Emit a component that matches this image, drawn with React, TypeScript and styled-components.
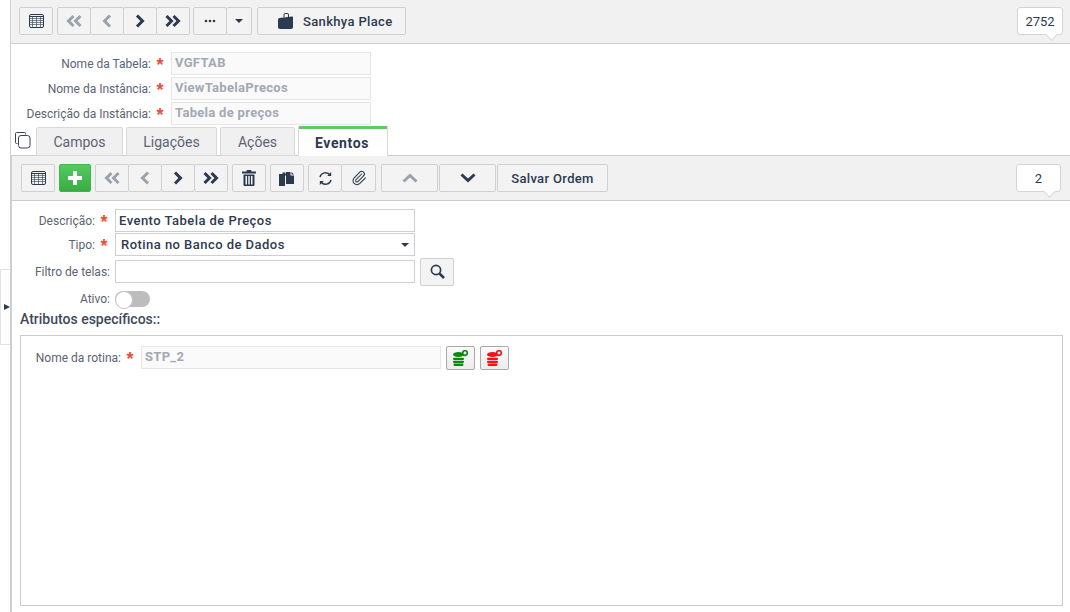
import React from "react";
import styled, { createGlobalStyle } from "styled-components";
import { Paperclip } from "lucide-react";

const Global = createGlobalStyle`
  html, body { margin: 0; padding: 0; background: #fff; overflow: hidden; }
  body { font-family: Roboto, "Liberation Sans", Arial, sans-serif; color: #2f3b4e; }
  * { box-sizing: border-box; }
`;

const Page = styled.div`
  position: relative;
  height: 612px;
  padding-left: 10px;
  overflow: hidden;
`;
const Handle = styled.div`
  position: absolute;
  left: 0;
  top: 269px;
  width: 10px;
  height: 76px;
  border: 1px solid #e2e2e2;
  border-right: none;
  background: #fff;
  display: flex;
  align-items: center;
  justify-content: center;
  &::before {
    content: "";
    margin-left: 3px;
    border-left: 6px solid #2c3a4f;
    border-top: 3px solid transparent;
    border-bottom: 3px solid transparent;
  }
`;
const Main = styled.div`
  height: 100%;
  border-left: 1px solid #cfcfcf;
  display: flex;
  flex-direction: column;
`;
const TopBar = styled.div`
  height: 44px;
  flex: none;
  padding: 7px 7px 0 8px;
  background: #f2f1f1;
  border-bottom: 1px solid #cccccc;
  display: flex;
  align-items: flex-start;
  gap: 4px;
`;
const SubBar = styled.div`
  height: 46px;
  flex: none;
  padding: 8px 9px 0 9px;
  background: #f2f1f1;
  border-top: 1px solid #cccccc;
  border-bottom: 1px solid #cccccc;
  display: flex;
  align-items: flex-start;
  gap: 4px;
`;
const Group = styled.div<{ $ml?: number; $mr?: number }>`
  display: flex;
  margin-left: ${(p) => p.$ml ?? 0}px;
  margin-right: ${(p) => p.$mr ?? 0}px;
  & > button + button { margin-left: -1px; }
`;
const SplitGroup = styled.div`
  display: flex;
  gap: 1px;
  margin-left: 1px;
`;
const Btn = styled.button<{ $w?: number; $h?: number }>`
  width: ${(p) => p.$w ?? 34}px;
  height: ${(p) => p.$h ?? 28}px;
  flex: none;
  padding: 0;
  border: 1px solid #d0d0d0;
  border-radius: 2px;
  background: #f3f3f3;
  color: #2c3a4f;
  display: inline-flex;
  align-items: center;
  justify-content: center;
  font-family: Roboto, "Liberation Sans", Arial, sans-serif;
  font-size: 13px;
  font-weight: 500;
  letter-spacing: 0.35px;
`;
const PlaceBtn = styled(Btn)`
  justify-content: flex-start;
  padding-left: 20px;
  gap: 10px;
`;
const AddBtn = styled(Btn)`
  border: 1px solid #3fb54a;
  background: linear-gradient(#55c95e, #37ad43);
  color: #fff;
`;
const Counter = styled.div<{ $w: number; $h: number }>`
  position: relative;
  margin-left: auto;
  width: ${(p) => p.$w}px;
  height: ${(p) => p.$h}px;
  background: #fff;
  border: 1px solid #d4d4d4;
  border-radius: 3px;
  font-size: 13px;
  color: #2c3a4f;
  display: flex;
  align-items: center;
  justify-content: center;
  &::after {
    content: "";
    position: absolute;
    right: 6px;
    bottom: -5px;
    width: 8px;
    height: 8px;
    background: #fff;
    border-right: 1px solid #d4d4d4;
    border-bottom: 1px solid #d4d4d4;
    transform: rotate(45deg);
  }
`;
const HeaderFields = styled.div`
  padding-top: 8px;
  display: flex;
  flex-direction: column;
  gap: 2px;
`;
const Row = styled.div<{ $gapTop?: number }>`
  display: flex;
  align-items: center;
  height: 23px;
  margin-top: ${(p) => p.$gapTop ?? 0}px;
`;
const Label = styled.label<{ $w: number }>`
  width: ${(p) => p.$w}px;
  flex: none;
  text-align: right;
  font-size: 12px;
  color: #5b6472;
  white-space: nowrap;
`;
const Star = styled.span`
  width: 18px;
  flex: none;
  margin-right: 2px;
  text-align: center;
  color: #e8503a;
  font-size: 18px;
  line-height: 23px;
  padding-top: 4px;
  font-family: "Liberation Sans", Arial, sans-serif;
  font-weight: 700;
`;
const ReadOnly = styled.div<{ $w: number }>`
  width: ${(p) => p.$w}px;
  height: 23px;
  flex: none;
  border: 1px solid #e6e6e6;
  background: #fafafa;
  color: #a3a9b3;
  font-size: 13px;
  font-weight: 700;
  line-height: 20px;
  padding-left: 3px;
  letter-spacing: 0.3px;
`;
const Input = styled.div<{ $ml?: number }>`
  width: 300px;
  height: 23px;
  flex: none;
  margin-left: ${(p) => p.$ml ?? 0}px;
  border: 1px solid #cfcfcf;
  background: #fff;
  color: #2f3b4e;
  font-size: 13px;
  font-weight: 500;
  line-height: 21px;
  padding-left: 3px;
  letter-spacing: 0.46px;
  position: relative;
`;
const SelectValue = styled(Input)`
  padding-left: 5px;
  &::after {
    content: "";
    position: absolute;
    right: 5px;
    top: 9px;
    border-top: 4px solid #2c3a4f;
    border-left: 4px solid transparent;
    border-right: 4px solid transparent;
  }
`;
const TabsRow = styled.div`
  height: 30px;
  flex: none;
  margin-top: 1px;
  margin-bottom: -1px;
  display: flex;
  align-items: flex-end;
  position: relative;
  z-index: 1;
`;
const CopyHolder = styled.div`
  width: 25px;
  height: 30px;
  flex: none;
  padding: 6px 0 0 4px;
  color: #3a4555;
`;
const Tab = styled.div<{ $w: number; $active?: boolean }>`
  width: ${(p) => p.$w}px;
  height: ${(p) => (p.$active ? 30 : 29)}px;
  flex: none;
  margin-right: ${(p) => (p.$active ? 0 : 3)}px;
  display: flex;
  align-items: center;
  justify-content: center;
  font-size: 14px;
  color: ${(p) => (p.$active ? "#2c3a4f" : "#5b6472")};
  font-weight: ${(p) => (p.$active ? 700 : 400)};
  background: ${(p) => (p.$active ? "#fff" : "#f1f0f0")};
  border: 1px solid #d8d8d8;
  border-radius: 2px 2px 0 0;
  ${(p) => p.$active && "border-top: 3px solid #5ccb63; border-bottom: none; letter-spacing: .6px; padding-right: 2px;"}
`;
const Panel = styled.div`
  flex: 1;
  min-height: 0;
  border-left: 1px solid #cfcfcf;
  display: flex;
  flex-direction: column;
`;
const Form = styled.div`
  padding-top: 8px;
  display: flex;
  flex-direction: column;
`;
const SearchBtn = styled(Btn)`
  margin-left: 5px;
`;
const Toggle = styled.div`
  width: 35px;
  height: 16px;
  margin-left: 5px;
  border-radius: 8px;
  background: #bdbdbd;
  position: relative;
  &::before {
    content: "";
    position: absolute;
    left: 0;
    top: 0;
    width: 16px;
    height: 16px;
    border-radius: 50%;
    background: #fff;
    border: 1px solid #c4c4c4;
  }
`;
const SectionTitle = styled.div`
  margin: 1px 0 0 8px;
  height: 17px;
  font-size: 14px;
  font-weight: 500;
  line-height: 17px;
  color: #3f4a5a;
`;
const Box = styled.div`
  margin: 7px 7px 0 8px;
  height: 271px;
  border: 1px solid #cccccc;
  padding-top: 10px;
`;
const DbBtn = styled.button`
  width: 29px;
  height: 24px;
  flex: none;
  margin-left: 5px;
  padding: 0;
  border: 1px solid #a9a9a9;
  border-radius: 2px;
  background: linear-gradient(#fbfbfb, #ececec);
  display: inline-flex;
  align-items: center;
  justify-content: center;
`;

const S = { fill: "none", stroke: "currentColor" };

const Grid = () => (
  <svg width="15" height="14" viewBox="0 0 15 14" {...S} color="#2c3a4f">
    <rect x="0.5" y="0.5" width="14" height="13" rx="1.5" strokeWidth="1" />
    <path d="M1 2.5h13" strokeWidth="1" />
    <path d="M1 4.500h13M1 6.500h13M1 8.500h13M1 10.500h13M3.500 3v10M7.500 3v10M11.500 3v10" strokeWidth="0.6" />
  </svg>
);
const Chev = ({ dir, dbl, muted }: { dir: "l" | "r"; dbl?: boolean; muted?: boolean }) => {
  const flip = dir === "l" ? "scale(-1 1) translate(-16 0)" : undefined;
  return (
    <svg width="16" height="14" viewBox="0 0 16 14" {...S} strokeWidth="3" color={muted ? "#9aa2ad" : "#2c3a4f"}>
      <g transform={flip}>
        {dbl ? <path d="M1.500 2l5 5-5 5M8.500 2l5 5-5 5" /> : <path d="M5 1.500l5.500 5.500-5.500 5.500" />}
      </g>
    </svg>
  );
};
const Vert = ({ up, muted }: { up?: boolean; muted?: boolean }) => (
  <svg width="16" height="10" viewBox="0 0 16 10" {...S} strokeWidth="3" color={muted ? "#9aa2ad" : "#2c3a4f"}>
    <path d={up ? "M1.500 8.500L8 2.500l6.500 6" : "M1.500 1.500L8 7.500l6.500-6"} />
  </svg>
);
const Dots = () => (
  <svg width="12" height="4" viewBox="0 0 12 4" fill="#2c3a4f">
    <circle cx="2" cy="2" r="1.300" /><circle cx="6" cy="2" r="1.300" /><circle cx="10" cy="2" r="1.300" />
  </svg>
);
const Caret = () => (
  <svg width="8" height="4" viewBox="0 0 8 4" fill="#2c3a4f"><path d="M0 0h8L4 4z" /></svg>
);
const Plus = () => (
  <svg width="14" height="14" viewBox="0 0 14 14" fill="#fff"><path d="M5 0h4v5h5v4H9v5H5V9H0V5h5z" /></svg>
);
const Bag = () => (
  <svg width="15" height="16" viewBox="0 0 15 16" fill="#2c3a4f">
    <path d="M1.500 5L14 3.500c.6 0 1 .4 1 1V14c0 1-.8 2-2 2H2c-1.200 0-2-1-2-2V6.500C0 5.700.7 5.100 1.500 5z" />
    <path d="M5.500 4.500V2C5.500 .8 6.300 0 7.500 0h1.500c1.200 0 2 .8 2 2v2h-1V2c0-.6-.4-1-1-1H7.500c-.6 0-1 .4-1 1v2.500z" />
  </svg>
);
const Trash = () => (
  <svg width="14" height="16" viewBox="0 0 14 16" fill="#2c3a4f">
    <path d="M5 0h4l.7 1.500H14V3.500H0V1.500h4.300z" />
    <path fillRule="evenodd" d="M1.500 4.500h11V15a1 1 0 0 1-1 1h-9a1 1 0 0 1-1-1zM3.500 6v8.500h1.500V6zM6.250 6v8.500h1.500V6zM9 6v8.500h1.500V6z" />
  </svg>
);
const Paste = () => (
  <svg width="16" height="15" viewBox="0 0 16 15" fill="#2c3a4f">
    <path d="M0 3h3.500V1.500h3V3h1v1.500H6V15H0z" />
    <path d="M7 5.500V1h4.500v3.500H15V13H7z" />
    <path d="M12.500 1L15 3.500h-2.500z" />
  </svg>
);
const Refresh = () => (
  <svg width="15" height="15" viewBox="0 0 15 15" {...S} strokeWidth="1.400" color="#2c3a4f">
    <path d="M2 6.200A5.600 5.600 0 0 1 12 4" />
    <path d="M13 8.800A5.600 5.600 0 0 1 3 11" />
    <path d="M13.200 1v4h-4z" fill="#2c3a4f" stroke="none" />
    <path d="M1.800 14v-4h4z" fill="#2c3a4f" stroke="none" />
  </svg>
);
const Search = () => (
  <svg width="15" height="15" viewBox="0 0 15 15" {...S} color="#2c3a4f">
    <circle cx="6" cy="6" r="4.600" strokeWidth="1.700" />
    <path d="M9.500 9.500l4.500 4.500" strokeWidth="2.500" />
  </svg>
);
const CopyIcon = () => (
  <svg width="16" height="17" viewBox="0 0 16 17" {...S} strokeWidth="1">
    <path d="M2.500 11.500h-1a1 1 0 0 1-1-1v-9a1 1 0 0 1 1-1h8a1 1 0 0 1 1 1v1" />
    <rect x="3.500" y="3.500" width="11.500" height="12.500" rx="2.500" />
  </svg>
);
const Db = ({ color }: { color: string }) => (
  <svg width="17" height="16" viewBox="0 0 17 16" fill={color}>
    <ellipse cx="6.500" cy="4.500" rx="5.500" ry="2.500" />
    <rect x="1" y="7.700" width="11" height="2.300" rx="1.100" />
    <rect x="1" y="10.700" width="11" height="2.300" rx="1.100" />
    <rect x="1.500" y="13.600" width="10" height="2.300" rx="1.100" />
    <circle cx="13" cy="3" r="2.300" fill="#fff" stroke={color} strokeWidth="1.700" />
  </svg>
);

const TOP_FIELDS = [
  ["Nome da Tabela:", "VGFTAB"],
  ["Nome da Instância:", "ViewTabelaPrecos"],
  ["Descrição da Instância:", "Tabela de preços"],
];

export default function App() {
  return (
    <Page>
      <Global />
      <Handle />
      <Main>
        <TopBar>
          <Btn><Grid /></Btn>
          <Group>
            <Btn><Chev dir="l" dbl muted /></Btn>
            <Btn><Chev dir="l" muted /></Btn>
            <Btn><Chev dir="r" /></Btn>
            <Btn><Chev dir="r" dbl /></Btn>
          </Group>
          <Group $ml={-1} $mr={1}>
            <Btn><Dots /></Btn>
            <Btn $w={26}><Caret /></Btn>
          </Group>
          <PlaceBtn $w={149}><Bag />Sankhya Place</PlaceBtn>
          <Counter $w={46} $h={28}>2752</Counter>
        </TopBar>
        <HeaderFields>
          {TOP_FIELDS.map(([l, v]) => (
            <Row key={l}>
              <Label $w={140}>{l}</Label>
              <Star>*</Star>
              <ReadOnly $w={200}>{v}</ReadOnly>
            </Row>
          ))}
        </HeaderFields>
        <TabsRow>
          <CopyHolder><CopyIcon /></CopyHolder>
          <Tab $w={87}>Campos</Tab>
          <Tab $w={91}>Ligações</Tab>
          <Tab $w={75}>Ações</Tab>
          <Tab $w={90} $active>Eventos</Tab>
        </TabsRow>
        <Panel>
          <SubBar>
            <Btn><Grid /></Btn>
            <AddBtn $w={32}><Plus /></AddBtn>
            <Group>
              <Btn><Chev dir="l" dbl muted /></Btn>
              <Btn><Chev dir="l" muted /></Btn>
              <Btn><Chev dir="r" /></Btn>
              <Btn><Chev dir="r" dbl /></Btn>
            </Group>
            <Btn><Trash /></Btn>
            <Btn><Paste /></Btn>
            <Group>
              <Btn><Refresh /></Btn>
              <Btn $w={35}><Paperclip size={16} strokeWidth={1.6} /></Btn>
            </Group>
            <SplitGroup>
              <Btn $w={57}><Vert up muted /></Btn>
              <Btn $w={57}><Vert /></Btn>
              <Btn $w={111}>Salvar Ordem</Btn>
            </SplitGroup>
            <Counter $w={45} $h={28}>2</Counter>
          </SubBar>
          <Form>
            <Row>
              <Label $w={83}>Descrição:</Label>
              <Star>*</Star>
              <Input>Evento Tabela de Preços</Input>
            </Row>
            <Row $gapTop={1}>
              <Label $w={83}>Tipo:</Label>
              <Star>*</Star>
              <SelectValue>Rotina no Banco de Dados</SelectValue>
            </Row>
            <Row $gapTop={4}>
              <Label $w={98}>Filtro de telas:</Label>
              <Input $ml={5} />
              <SearchBtn><Search /></SearchBtn>
            </Row>
            <Row $gapTop={4}>
              <Label $w={98}>Ativo:</Label>
              <Toggle />
            </Row>
            <SectionTitle>Atributos específicos::</SectionTitle>
            <Box>
              <Row>
                <Label $w={100}>Nome da rotina:</Label>
                <Star>*</Star>
                <ReadOnly $w={300}>STP_2</ReadOnly>
                <DbBtn><Db color="#0a8a0a" /></DbBtn>
                <DbBtn><Db color="#f01414" /></DbBtn>
              </Row>
            </Box>
          </Form>
        </Panel>
      </Main>
    </Page>
  );
}
